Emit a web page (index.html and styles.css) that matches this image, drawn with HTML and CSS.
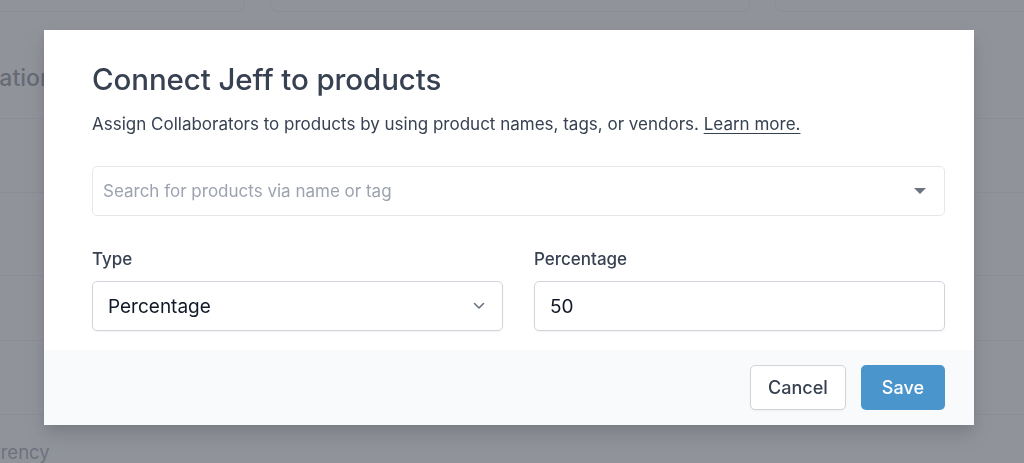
FILE: index.html
```html
<!DOCTYPE html>
<html>
  <head>
    <meta charset="UTF-8">
    <meta name="viewport" content="width=device-width, initial-scale=1.0">
    <title>Connect Jeff to products</title>
    <link rel="stylesheet" href="styles.css">
  </head>
  <body>
    <!-- 背景页面 -->
    <div class="page">
      <div class="cards">
        <div class="card card1"></div>
        <div class="card card2"></div>
        <div class="card card3"></div>
      </div>
      <div class="heading">Collaboration</div>
      <div class="rows">
        <div class="row"></div>
        <div class="row"></div>
        <div class="row"></div>
        <div class="row"></div>
        <div class="row last">Currency</div>
      </div>
    </div>

    <!-- 遮罩 + 弹窗 -->
    <div class="overlay">
      <div class="modal">
        <div class="modal-body">
          <h2 class="title">Connect Jeff to products</h2>
          <p class="desc">Assign Collaborators to products by using product names, tags, or vendors. <a href="javascript:;">Learn more.</a></p>

          <div class="search">
            <span class="placeholder">Search for products via name or tag</span>
            <span class="caret"></span>
          </div>

          <div class="fields">
            <div class="field">
              <label>Type</label>
              <div class="control">
                <span>Percentage</span>
                <svg width="14" height="14" viewBox="0 0 14 14" fill="none">
                  <path d="M2.5 4.5 L7 9 L11.5 4.5" stroke="#6b7280" stroke-width="1.6" stroke-linecap="round" stroke-linejoin="round"/>
                </svg>
              </div>
            </div>
            <div class="field">
              <label>Percentage</label>
              <div class="control">
                <span>50</span>
              </div>
            </div>
          </div>
        </div>
        <div class="modal-footer">
          <a href="javascript:;" class="btn btn-cancel">Cancel</a>
          <a href="javascript:;" class="btn btn-save">Save</a>
        </div>
      </div>
    </div>
  </body>
</html>
```

FILE: styles.css
```css
* {
  margin: 0;
  padding: 0;
  box-sizing: border-box;
}

html,
body {
  overflow: hidden;
}

body {
  font-family: Inter, "Noto Sans", sans-serif;
  color: #374151;
  background: #fff;
  width: 1024px;
  height: 463px;
}

a {
  color: inherit;
}

/* 背景页面 */
.page {
  height: 463px;
  overflow: hidden;
}
.cards {
  display: flex;
  gap: 25px;
  margin-left: -30px;
  margin-right: -30px;
  height: 12px;
}
.card {
  height: 12px;
  border: 1px solid #e5e7eb;
  border-top: none;
  border-radius: 0 0 8px 8px;
  background: #fff;
}
.card1 {
  width: 275px;
}
.card2 {
  width: 480px;
}
.card3 {
  flex: 1;
}
.heading {
  margin-top: 52px;
  margin-left: -93px;
  font-size: 23px;
  font-weight: 500;
  color: #4b5563;
  height: 54px;
  white-space: nowrap;
}
.rows {
  border-top: 1px solid #e5e7eb;
}
.row {
  height: 74px;
  border-bottom: 1px solid #e5e7eb;
}
.row:nth-child(2) {
  height: 83px;
}
.row:nth-child(3) {
  height: 65px;
}
.row:nth-child(4) {
  height: 74px;
}
.row.last {
  border-bottom: none;
  height: 48px;
  padding-top: 27px;
  margin-left: -31px;
  font-size: 18.5px;
  line-height: 20px;
  color: #6b7280;
  white-space: nowrap;
}

/* 遮罩 */
.overlay {
  position: fixed;
  top: 0;
  left: 0;
  right: 0;
  bottom: 0;
  background: rgba(110, 113, 124, 0.76);
  padding: 30px 0 0 44px;
}

.modal {
  width: 930px;
  background: #fff;
  box-shadow: 0 10px 20px rgba(0, 0, 0, 0.12), 0 4px 8px rgba(0, 0, 0, 0.06);
}
.modal-body {
  padding: 29px 29px 19px 48px;
}
.title {
  font-size: 29.5px;
  font-weight: 500;
  color: #374151;
  line-height: 40px;
  letter-spacing: -0.1px;
}
.desc {
  margin-top: 13px;
  font-size: 17px;
  line-height: 24px;
  color: #374151;
}
.desc a {
  text-decoration: underline;
  text-underline-offset: 3px;
}

.search {
  margin-top: 30px;
  height: 50px;
  border: 1px solid #e5e7eb;
  border-radius: 5px;
  display: flex;
  align-items: center;
  justify-content: space-between;
  padding: 0 18px 0 10px;
}
.placeholder {
  font-size: 17px;
  color: #9ca3af;
}
.caret {
  width: 0;
  height: 0;
  border-left: 6px solid transparent;
  border-right: 6px solid transparent;
  border-top: 6px solid #6b7280;
}

.fields {
  display: flex;
  gap: 31px;
  margin-top: 31px;
}
.field {
  flex: 1;
}
.field label {
  display: block;
  font-size: 17px;
  font-weight: 500;
  color: #374151;
  line-height: 24px;
  margin-bottom: 10px;
}
.control {
  height: 50px;
  border: 1px solid #d1d5db;
  border-radius: 5px;
  display: flex;
  align-items: center;
  justify-content: space-between;
  padding: 0 16px 0 15px;
  font-size: 19px;
  color: #111827;
  box-shadow: 0 1px 2px rgba(0, 0, 0, 0.05);
}

.modal-footer {
  background: #f9fafb;
  height: 75px;
  display: flex;
  justify-content: flex-end;
  align-items: center;
  gap: 15px;
  padding: 0 29px 0 0;
}
.btn {
  height: 45px;
  display: flex;
  align-items: center;
  padding: 0 17px;
  border-radius: 5px;
  font-size: 18px;
  font-weight: 500;
  text-decoration: none;
}
.btn-cancel {
  border: 1px solid #d1d5db;
  background: #fff;
  color: #374151;
  box-shadow: 0 1px 2px rgba(0, 0, 0, 0.05);
}
.btn-save {
  background: #4a96cc;
  color: #fff;
  padding: 0 21px;
}
```
